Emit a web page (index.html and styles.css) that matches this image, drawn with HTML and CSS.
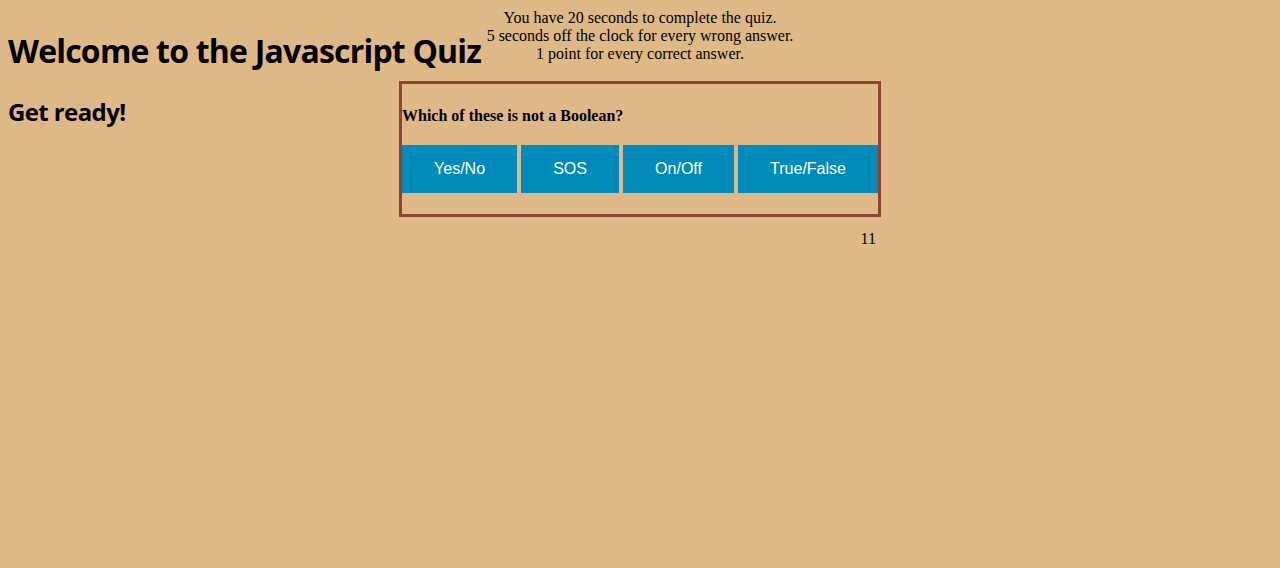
FILE: index.html
```html
<!DOCTYPE html>
<html>
<head>
<meta charset="utf-8">
<link rel="stylesheet" href="styles.css">
</head>
<body>
<header class="top">
  <h1 class="title">Welcome to the Javascript Quiz</h1>
  <p class="rules">You have 20 seconds to complete the quiz.<br>5 seconds off the clock for every wrong answer.<br>1 point for every correct answer.</p>
</header>
<main class="stage">
  <h2 class="ready">Get ready!</h2>
  <section class="quiz">
    <h4 class="question">Which of these is not a Boolean?</h4>
    <div class="answers">
      <button class="answer">Yes/No</button>
      <button class="answer">SOS</button>
      <button class="answer">On/Off</button>
      <button class="answer">True/False</button>
    </div>
  </section>
  <p class="timer">11</p>
</main>
</body>
</html>
```
FILE: styles.css
```css
html, body {
  background: #deb887;
}
body {
  margin: 8px;
  font-family: "Liberation Serif", "Times New Roman", serif;
  font-size: 16px;
  color: #000;
}
.top {
  display: grid;
  height: 73px;
}
.top > * {
  grid-area: 1 / 1;
}
.title {
  margin: 23px 0 0;
  font-family: "Open Sans", "Noto Sans", sans-serif;
  font-size: 32px;
  font-weight: 700;
  line-height: 40px;
  letter-spacing: -0.8px;
}
.rules {
  margin: 0;
  padding-top: 1px;
  text-align: center;
  line-height: 18px;
}
.stage {
  display: grid;
  grid-template-columns: 1fr 482px 1fr;
  align-items: start;
}
.ready {
  grid-column: 1;
  grid-row: 1;
  margin: 15px 0 0;
  font-family: "Open Sans", "Noto Sans", sans-serif;
  font-size: 24px;
  font-weight: 700;
  line-height: 32px;
  letter-spacing: -0.6px;
}
.quiz {
  grid-column: 2;
  grid-row: 1;
  border: 3px solid #8b4532;
  padding-bottom: 21px;
}
.question {
  margin: 23px 0 0;
  font-size: 16px;
  font-weight: 700;
  line-height: 18px;
  padding-bottom: 20px;
}
.answers {
  display: flex;
  gap: 4px;
}
.answer {
  flex: 1 1 auto;
  height: 48px;
  padding: 0 30px;
  border: none;
  background: #008cba;
  color: #fff;
  font-family: "Liberation Sans", Arial, sans-serif;
  font-size: 16px;
}
.timer {
  grid-column: 2;
  grid-row: 2;
  margin: 13px 0 0;
  padding-right: 5px;
  text-align: right;
  line-height: 18px;
}
```
